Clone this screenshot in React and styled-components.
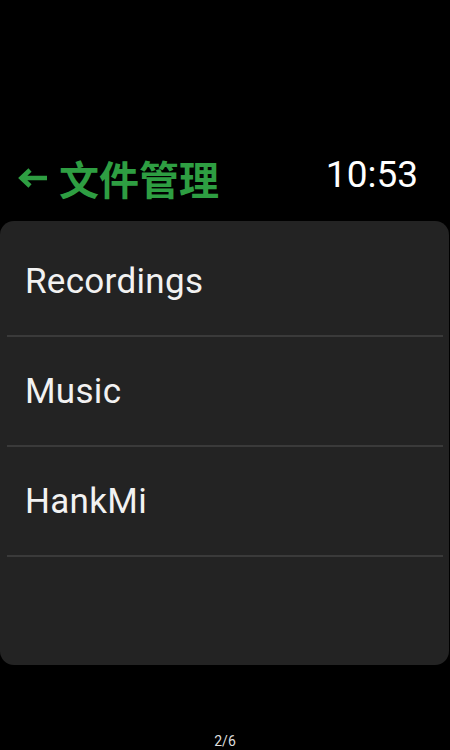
import React from "react";
import styled, { createGlobalStyle } from "styled-components";

const GlobalStyle = createGlobalStyle`
  body {
    margin: 0;
    background: #000000;
    font-family: Roboto, "Noto Sans", "Noto Sans CJK SC", sans-serif;
  }
`;

const Screen = styled.div`
  width: 450px;
  height: 750px;
  display: flex;
  flex-direction: column;
  background: #000000;
  overflow: hidden;
`;

const Header = styled.div`
  margin-top: 150px;
  height: 56px;
  display: flex;
  align-items: center;
  justify-content: space-between;
  padding: 0 32px 0 17px;
`;

const BackTitle = styled.div`
  display: flex;
  align-items: center;
  gap: 10px;
  color: #2e9e42;
`;

const Title = styled.span`
  font-family: "Noto Sans CJK SC", "Noto Sans", sans-serif;
  font-size: 40px;
  font-weight: 700;
  line-height: 1;
`;

const Clock = styled.span`
  color: #ffffff;
  font-family: Roboto, sans-serif;
  font-size: 37px;
  line-height: 1;
  padding-bottom: 8px;
`;

const Card = styled.div`
  margin-top: 15px;
  width: 449px;
  height: 444px;
  box-sizing: border-box;
  padding-top: 6px;
  background: #232323;
  border-radius: 14px;
  display: flex;
  flex-direction: column;
`;

const Row = styled.div`
  height: 108px;
  display: flex;
  align-items: center;
  padding-left: 25px;
  color: #f2f2f2;
  font-family: Roboto, sans-serif;
  font-size: 35px;
  letter-spacing: 0.3px;
`;

const Divider = styled.div`
  height: 2px;
  margin: 0 6px 0 7px;
  background: #3a3a3a;
`;

const Pager = styled.div`
  margin-top: auto;
  height: 18px;
  text-align: center;
  color: #dddddd;
  font-family: Roboto, sans-serif;
  font-size: 14px;
  line-height: 18px;
`;

const BackArrow = () => (
  <svg width="32" height="22" viewBox="0 0 32 22">
    <path
      d="M30 11 H5 M13 3 L4.5 11 L13 19"
      fill="none"
      stroke="#2e9e42"
      strokeWidth="4.6"
    />
  </svg>
);

const folders = ["Recordings", "Music", "HankMi"];

const App = () => {
  return (
    <Screen>
      <GlobalStyle />
      <Header>
        <BackTitle>
          <BackArrow />
          <Title>文件管理</Title>
        </BackTitle>
        <Clock>10:53</Clock>
      </Header>
      <Card>
        {folders.map((name) => (
          <React.Fragment key={name}>
            <Row>{name}</Row>
            <Divider />
          </React.Fragment>
        ))}
      </Card>
      <Pager>2/6</Pager>
    </Screen>
  );
};

export default App;
